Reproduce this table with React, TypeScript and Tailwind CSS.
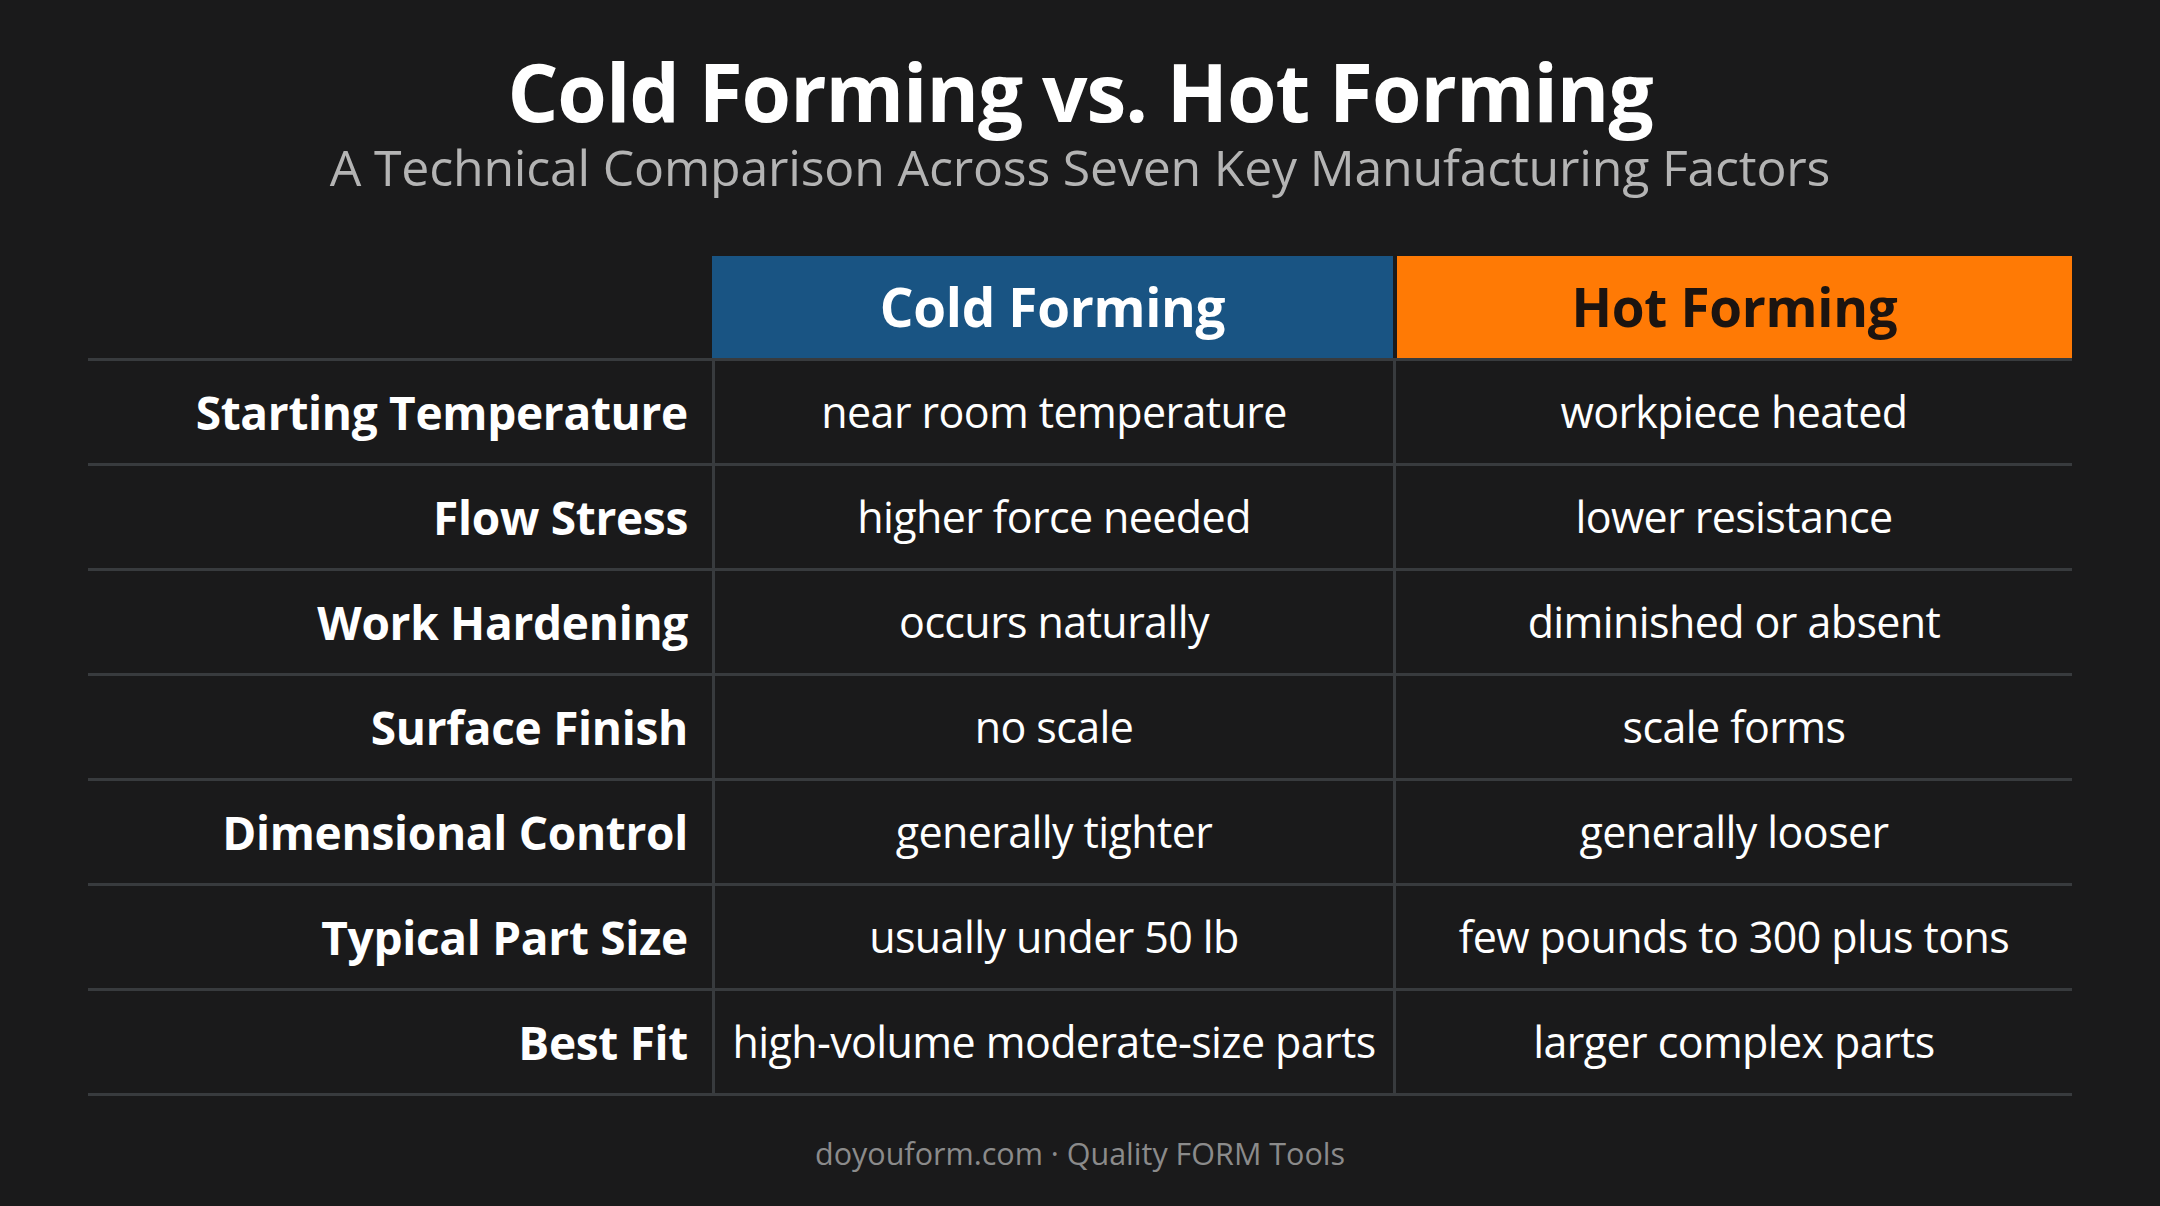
const rows: [string, string, string][] = [
  ['Starting Temperature', 'near room temperature', 'workpiece heated'],
  ['Flow Stress', 'higher force needed', 'lower resistance'],
  ['Work Hardening', 'occurs naturally', 'diminished or absent'],
  ['Surface Finish', 'no scale', 'scale forms'],
  ['Dimensional Control', 'generally tighter', 'generally looser'],
  ['Typical Part Size', 'usually under 50 lb', 'few pounds to 300 plus tons'],
  ['Best Fit', 'high-volume moderate-size parts', 'larger complex parts'],
]

export default function App() {
  return (
    <div
      className="w-[2160px] h-[1206px] bg-[#1a1a1b] flex flex-col items-center overflow-hidden"
      style={{ fontFamily: '"Open Sans", "Liberation Sans", sans-serif' }}
    >
      {/* title */}
      <h1 className="mt-[51px] text-[80px] leading-[80px] font-bold text-white tracking-[-1px]">
        Cold Forming vs. Hot Forming
      </h1>
      <p className="mt-[10px] text-[50px] leading-[52px] text-[#b4b4b4] tracking-[-0.2px]">
        A Technical Comparison Across Seven Key Manufacturing Factors
      </p>

      {/* table */}
      <div className="mt-[63px] w-[1984px] flex flex-col">
        <div className="flex h-[102px]">
          <div className="w-[624px]" />
          <div className="w-[681px] bg-[#195483] flex items-center justify-center text-white text-[53px] font-bold tracking-[-0.3px]">
            Cold Forming
          </div>
          <div className="w-[4px]" />
          <div className="flex-1 bg-[#ff7a05] flex items-center justify-center text-[#1c1410] text-[53px] font-bold tracking-[-0.3px]">
            Hot Forming
          </div>
        </div>
        {rows.map(([label, cold, hot]) => (
          <div key={label} className="flex h-[105px] border-t-[3px] border-[#383b3e]">
            <div className="w-[624px] flex items-center justify-end pr-[24px] text-white text-[46px] font-bold tracking-[-0.3px]">
              {label}
            </div>
            <div className="w-[681px] border-l-[3px] border-[#383b3e] flex items-center justify-center text-white text-[43px] tracking-[-0.6px]">
              {cold}
            </div>
            <div className="flex-1 border-l-[3px] border-[#383b3e] flex items-center justify-center text-white text-[43px] tracking-[-0.6px]">
              {hot}
            </div>
          </div>
        ))}
        <div className="h-[3px] bg-[#383b3e]" />
      </div>

      <p className="mt-[35px] text-[30.5px] text-[#8b8b8b]">doyouform.com · Quality FORM Tools</p>
    </div>
  )
}
